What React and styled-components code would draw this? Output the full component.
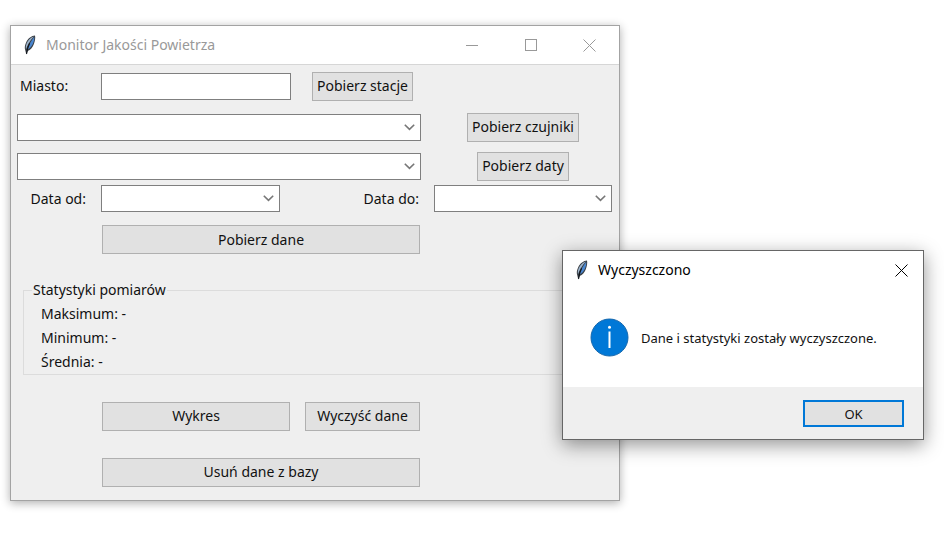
import React from "react";
import styled, { createGlobalStyle } from "styled-components";

const GlobalStyle = createGlobalStyle`
  *, *::before, *::after { box-sizing: border-box; }
  body {
    margin: 0;
    background: #ffffff;
    color: #111111;
    font: 14px/20px "Noto Sans", "Open Sans", sans-serif;
  }
  button, input, select { font: inherit; color: inherit; }
`;

const Desktop = styled.main`
  position: relative;
  min-height: 100vh;
  padding: 25px 324px 50px 10px;
  overflow: hidden;
`;

const Window = styled.section`
  min-width: 560px;
  border: 1px solid #a3a3a3;
  background: #efefef;
  box-shadow: 0 2px 9px rgba(0, 0, 0, 0.32);
`;

const Dialog = styled.section`
  position: absolute;
  top: 250px;
  right: 20px;
  min-width: 362px;
  border: 1px solid #666666;
  background: #ffffff;
  box-shadow: 0 5px 18px rgba(0, 0, 0, 0.42);
`;

const TitleBar = styled.header`
  display: flex;
  align-items: center;
  height: ${(p) => (p.$inactive ? 39 : 38)}px;
  padding-left: 12px;
  background: #ffffff;
  color: ${(p) => (p.$inactive ? "#999999" : "#000000")};
  border-bottom: ${(p) => (p.$inactive ? "1px solid #d6d6d6" : "none")};
`;

const Title = styled.h1`
  flex: 1;
  margin: 0 0 0 9px;
  font-size: 14px;
  font-weight: 400;
  white-space: nowrap;
`;

const CaptionButton = styled.button`
  display: flex;
  align-items: center;
  justify-content: center;
  align-self: stretch;
  width: ${(p) => (p.$narrow ? 43 : 59)}px;
  padding: 0;
  border: 0;
  background: transparent;
  svg { display: block; }
`;

const Form = styled.form`
  display: grid;
  grid-template-columns: 71px 190fr 117fr 178fr;
  grid-template-rows: 42px 40px 38px 27px 55px auto 56px 56px;
  column-gap: 13px;
  align-items: center;
  padding: 0 7px 0 6px;
`;

const Label = styled.label`
  padding: 0 2px 0 3px;
  text-align: ${(p) => (p.$end ? "right" : "left")};
  white-space: nowrap;
`;

const Entry = styled.input`
  width: 100%;
  height: 27px;
  padding: 0 5px;
  border: 1px solid #7f7f7f;
  border-radius: 0;
  background: #ffffff;
`;

const ComboFrame = styled.div`
  position: relative;
  grid-column: ${(p) => p.$columns || "auto"};
  margin-right: ${(p) => (p.$inset ? 11 : 0)}px;
  svg {
    position: absolute;
    right: 6px;
    top: 10px;
    pointer-events: none;
  }
`;

const Select = styled.select`
  display: block;
  width: 100%;
  height: 27px;
  padding: 0 24px 0 5px;
  border: 1px solid #7f7f7f;
  border-radius: 0;
  background: #ffffff;
  appearance: none;
`;

const Button = styled.button`
  grid-column: ${(p) => p.$columns || "auto"};
  justify-self: ${(p) => (p.$fill ? "stretch" : "center")};
  height: 29px;
  margin: 0 1px;
  padding: 0 4px;
  border: 1px solid #b0b0b0;
  background: #e1e1e1;
  white-space: nowrap;
`;

const Stats = styled.fieldset`
  grid-column: 1 / -1;
  min-width: 0;
  margin: 13px 0 13px 6px;
  padding: 2px 0 0 17px;
  border: 1px solid #dcdcdc;
`;

const Legend = styled.legend`
  margin-left: -9px;
  padding: 0 1px;
`;

const Stat = styled.p`
  margin: 0;
  line-height: 24px;
`;

const Message = styled.div`
  display: flex;
  align-items: center;
  gap: 12px;
  padding: 29px 38px 30px 27px;
  svg { display: block; flex: none; }
`;

const MessageText = styled.p`
  margin: 0;
  font-size: 13px;
  white-space: nowrap;
`;

const DialogFooter = styled.footer`
  display: flex;
  justify-content: flex-end;
  padding: 13px 19px 12px;
  background: #efefef;
`;

const DefaultButton = styled.button`
  width: 101px;
  height: 27px;
  padding: 0;
  border: 2px solid #0078d7;
  background: #e1e1e1;
  font-size: 13px;
  line-height: 20px;
`;

function Feather() {
  return (
    <svg width="14" height="20" viewBox="0 0 14 20" aria-hidden="true">
      <path d="M12 .5C8.600.7 5.200 3.200 3.200 7.200C1.800 10.100 1.400 12.800 2.200 15L3.300 19.500L4.700 15.900C7.500 15 9.600 12.500 10.800 9.200C11.900 6.200 12.600 3 12 .5Z" fill="#3a3f45" />
      <path d="M10.900 1.500C7.800 2.500 5.100 5 3.700 8.200C2.800 10.500 2.600 12.600 3 14.200C4.600 10 7 5.500 10.900 1.500Z" fill="#9db4cc" />
      <path d="M11.200 2C8.300 5.500 6 9.800 4.500 14.500C6.800 13.500 8.800 11.400 10 8.500C10.900 6.200 11.500 4 11.200 2Z" fill="#4a86cf" />
      <path d="M6.600 8.300C5.200 11 4.100 14.500 3.500 18.800" fill="none" stroke="#11161c" strokeWidth="1.200" />
    </svg>
  );
}

function CloseIcon() {
  return (
    <svg width="13" height="13" viewBox="0 0 13 13" aria-hidden="true">
      <path d="M.5.5L12.500 12.500M12.500.5L.5 12.500" stroke="currentColor" />
    </svg>
  );
}

function Combo({ label, id, columns, inset }) {
  return (
    <ComboFrame $columns={columns} $inset={inset}>
      <Select id={id} aria-label={label} />
      <svg width="11" height="7" viewBox="0 0 11 7" aria-hidden="true">
        <path d="M.8.8L5.500 5.400L10.200.8" fill="none" stroke="#777777" strokeWidth="1.600" />
      </svg>
    </ComboFrame>
  );
}

export default function App() {
  return (
    <>
      <GlobalStyle />
      <Desktop>
        <Window>
          <TitleBar $inactive>
            <Feather />
            <Title>Monitor Jakości Powietrza</Title>
            <CaptionButton aria-label="Minimalizuj">
              <svg width="12" height="13" viewBox="0 0 12 13" aria-hidden="true">
                <path d="M0 6.500H12" stroke="currentColor" />
              </svg>
            </CaptionButton>
            <CaptionButton aria-label="Maksymalizuj">
              <svg width="12" height="12" viewBox="0 0 12 12" aria-hidden="true">
                <rect x=".5" y=".5" width="11" height="11" fill="none" stroke="currentColor" />
              </svg>
            </CaptionButton>
            <CaptionButton aria-label="Zamknij">
              <CloseIcon />
            </CaptionButton>
          </TitleBar>
          <Form onSubmit={(e) => e.preventDefault()}>
            <Label htmlFor="city">Miasto:</Label>
            <Entry id="city" type="text" />
            <Button type="button">Pobierz stacje</Button>
            <span />

            <Combo label="Stacja" columns="1 / 4" />
            <Button type="button">Pobierz czujniki</Button>

            <Combo label="Czujnik" columns="1 / 4" />
            <Button type="button">Pobierz daty</Button>

            <Label htmlFor="from" $end>Data od:</Label>
            <Combo id="from" inset />
            <Label htmlFor="to" $end>Data do:</Label>
            <Combo id="to" />

            <Button type="button" $columns="2 / 4" $fill>Pobierz dane</Button>

            <Stats>
              <Legend>Statystyki pomiarów</Legend>
              <Stat>Maksimum: -</Stat>
              <Stat>Minimum: -</Stat>
              <Stat>Średnia: -</Stat>
            </Stats>

            <Button type="button" $columns="2 / 3" $fill>Wykres</Button>
            <Button type="button" $columns="3 / 4" $fill>Wyczyść dane</Button>

            <Button type="button" $columns="2 / 4" $fill>Usuń dane z bazy</Button>
          </Form>
        </Window>

        <Dialog role="dialog" aria-labelledby="dialog-title">
          <TitleBar>
            <Feather />
            <Title as="h2" id="dialog-title">Wyczyszczono</Title>
            <CaptionButton $narrow aria-label="Zamknij">
              <CloseIcon />
            </CaptionButton>
          </TitleBar>
          <Message>
            <svg width="39" height="39" viewBox="0 0 39 39" aria-hidden="true">
              <circle cx="19.500" cy="19.500" r="18.500" fill="#0078d7" stroke="#1467ad" />
              <rect x="18.500" y="13.500" width="2" height="16.500" fill="#ffffff" />
              <circle cx="19.500" cy="9.200" r="1.500" fill="#ffffff" />
            </svg>
            <MessageText>Dane i statystyki zostały wyczyszczone.</MessageText>
          </Message>
          <DialogFooter>
            <DefaultButton type="button">OK</DefaultButton>
          </DialogFooter>
        </Dialog>
      </Desktop>
    </>
  );
}
